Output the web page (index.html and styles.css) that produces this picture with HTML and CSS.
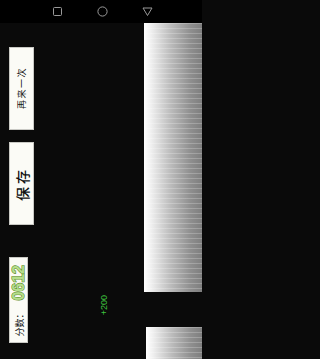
FILE: index.html
```html
<!DOCTYPE html>
<html>
<head>
<meta charset="utf-8">
<link rel="stylesheet" href="styles.css">
</head>
<body>
<div class="nav">
  <svg class="navicon" width="11" height="11" viewBox="0 0 11 11"><rect x="1.5" y="1.5" width="8" height="8" rx="1" fill="none" stroke="#9a9a9a" stroke-width="1"/></svg>
  <svg class="navicon" width="11" height="11" viewBox="0 0 11 11"><circle cx="5.5" cy="5.5" r="4.6" fill="none" stroke="#9a9a9a" stroke-width="1"/></svg>
  <svg class="navicon" width="11" height="11" viewBox="0 0 11 11"><path d="M1 2 L10 2 L5.5 9.5 Z" fill="none" stroke="#9a9a9a" stroke-width="1" stroke-linejoin="round"/></svg>
</div>
<div class="main">
  <div class="controls">
    <div class="btn btn-retry"><span class="vtext retry">再来一次</span></div>
    <div class="btn btn-save"><span class="vtext save">保存</span></div>
    <div class="scorebox"><span class="vtext score"><span class="label">分数：</span><span class="digits">0612</span></span></div>
  </div>
  <div class="field">
    <span class="vtext bonus">+200</span>
  </div>
  <div class="pipes">
    <div class="pipe pipe-top"></div>
    <div class="pipe pipe-bottom"></div>
  </div>
</div>
</body>
</html>
```
FILE: styles.css
```css
html, body {
  margin: 0;
  padding: 0;
  background: #0a0a0a;
}
body {
  width: 202px;
  height: 359px;
  overflow: hidden;
  font-family: "Noto Sans CJK SC", "Liberation Sans", sans-serif;
}
.nav {
  height: 23px;
  background: #000;
  display: flex;
  justify-content: center;
  align-items: center;
  gap: 34px;
  padding-left: 2px;
  box-sizing: border-box;
}
.navicon {
  display: block;
}
.main {
  display: flex;
  height: 336px;
}
.controls {
  width: 34px;
  padding-left: 9px;
  box-sizing: border-box;
  display: flex;
  flex-direction: column;
  align-items: flex-start;
  padding-top: 24px;
}
.btn {
  width: 25px;
  height: 83px;
  background: #fbfbf6;
  border: 1px solid #c9c9c4;
  box-sizing: border-box;
  display: flex;
  align-items: center;
  justify-content: center;
}
.btn-save {
  margin-top: 12px;
}
.vtext {
  writing-mode: vertical-rl;
  text-orientation: sideways;
  transform: rotate(180deg);
  white-space: nowrap;
  line-height: 1;
}
.retry {
  font-size: 9px;
  letter-spacing: 1.5px;
  color: #111;
}
.save {
  font-size: 14px;
  letter-spacing: 3px;
  font-weight: 500;
  color: #111;
}
.scorebox {
  margin-top: 32px;
  width: 19px;
  height: 86px;
  background: #fbfbf6;
  border: 1px solid #c9c9c4;
  box-sizing: border-box;
  display: flex;
  justify-content: center;
  align-items: flex-end;
  padding-bottom: 5px;
}
.score {
  display: flex;
  align-items: center;
}
.label {
  font-size: 9px;
  color: #111;
  margin-bottom: 9px;
}
.digits {
  font-family: "Liberation Sans", sans-serif;
  font-weight: 700;
  font-size: 16px;
  color: #b6de8c;
  -webkit-text-stroke: 1.2px #5f8f2f;
  paint-order: stroke fill;
}
.field {
  flex: 1;
  position: relative;
}
.bonus {
  position: absolute;
  left: 66px;
  top: 272px;
  font-family: "Liberation Sans", sans-serif;
  font-size: 9px;
  color: #3ec43e;
}
.pipes {
  width: 58px;
  display: flex;
  flex-direction: column;
  gap: 35px;
}
.pipe {
  background:
    repeating-linear-gradient(to bottom, rgba(255,255,255,0.22) 0 1px, rgba(0,0,0,0) 1px 5px),
    linear-gradient(to right, #ffffff 0%, #f0f0f0 12%, #bdbdbd 45%, #8f8f8f 80%, #7e7e7e 100%);
}
.pipe-top {
  height: 269px;
}
.pipe-bottom {
  flex: 1;
  margin-left: 2px;
}
```
